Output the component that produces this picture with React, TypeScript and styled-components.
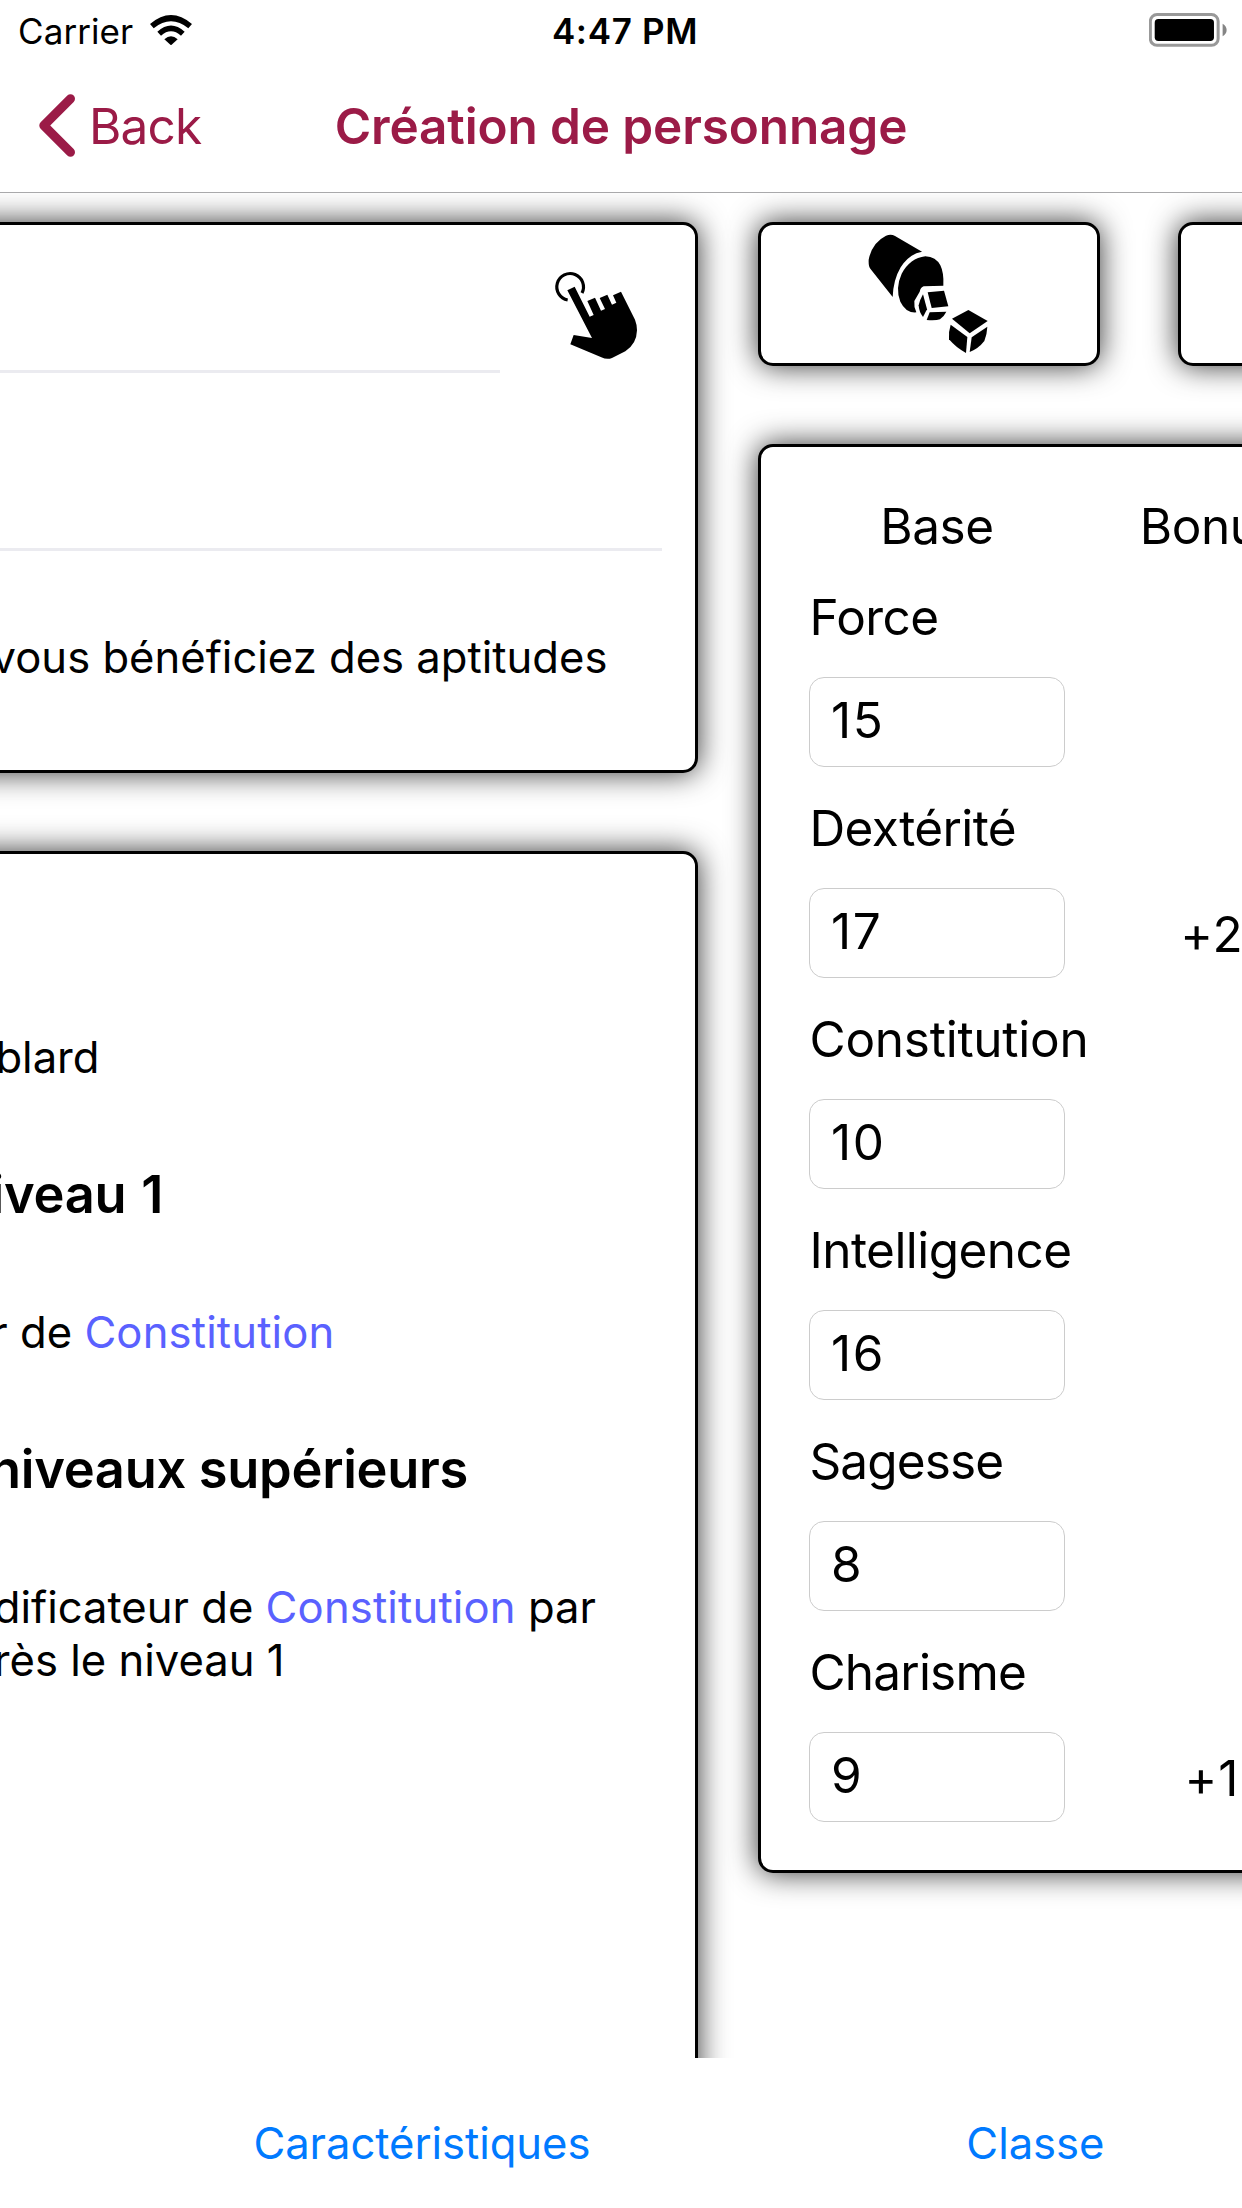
import React from 'react';
import styled, { createGlobalStyle } from 'styled-components';

const ACCENT = '#9b1b47';
const BLUE = '#007aff';
const LINK = '#5a61ff';

const GlobalStyle = createGlobalStyle`
  *, *::before, *::after { box-sizing: border-box; }
  body {
    margin: 0;
    background: #fff;
    color: #000;
    font-family: Inter, "Liberation Sans", sans-serif;
  }
`;

const Screen = styled.div`
  display: flex;
  flex-direction: column;
  width: 1242px;
  height: 2208px;
  overflow: hidden;
  background: #fff;
`;

/* Status bar */

const StatusBar = styled.div`
  display: grid;
  grid-template-columns: 1fr auto 1fr;
  align-items: center;
  flex: none;
  height: 60px;
  padding: 0 15px 0 18px;
  font-size: 35px;
  line-height: 42px;
`;

const Carrier = styled.div`
  display: flex;
  align-items: center;
  gap: 17px;
`;

const StatusText = styled.span<{ $strong?: boolean }>`
  padding: ${(p) => (p.$strong ? '2px 0 0 5px' : '2px 0 0')};
  font-weight: ${(p) => (p.$strong ? 600 : 400)};
  letter-spacing: ${(p) => (p.$strong ? '0.65px' : '0.08px')};
`;

const BatterySlot = styled.div`
  display: flex;
  justify-content: flex-end;
`;

/* Navigation bar */

const NavBar = styled.header`
  display: grid;
  grid-template-columns: 1fr auto 1fr;
  align-items: center;
  flex: none;
  height: 133px;
  padding: 0 39px 1px;
  border-bottom: 1px solid #a9a9ab;
  color: ${ACCENT};
  font-size: 49.5px;
  line-height: 60px;
`;

const BackButton = styled.button`
  display: flex;
  align-items: center;
  gap: 14px;
  padding: 0;
  border: 0;
  background: none;
  color: inherit;
  font: inherit;
  letter-spacing: -0.8px;
`;

const NavTitle = styled.h1`
  margin: 0;
  font-size: inherit;
  font-weight: 600;
  letter-spacing: -0.13px;
`;

/* Pages */

const Pages = styled.main`
  display: flex;
  gap: 60px;
  flex: none;
  height: 1865px;
  padding-top: 29px;
  overflow: hidden;
`;

const Page = styled.section<{ $width: number }>`
  display: flex;
  flex-direction: column;
  gap: 78px;
  flex: none;
  width: ${(p) => p.$width}px;
`;

const Card = styled.div<{ $height: number }>`
  flex: none;
  height: ${(p) => p.$height}px;
  border: 3px solid #000;
  border-radius: 15px;
  background: #fff;
  box-shadow: 0 0 30px rgba(0, 0, 0, 0.8);
`;

/* A card whose left part is scrolled out of view. */
const ScrolledCard = styled(Card)`
  margin-left: -63px;
  padding-left: 60px;
`;

const ChoiceRow = styled.div`
  display: flex;
  align-items: flex-start;
  gap: 52px;
  height: 148px;
`;

const HandSlot = styled.div`
  padding-top: 45px;
`;

const Field = styled.div<{ $width: number; $height: number }>`
  width: ${(p) => p.$width}px;
  height: ${(p) => p.$height}px;
  border-bottom: 3px solid #ebebf0;
`;

const Description = styled.div<{ $top: number }>`
  padding-top: ${(p) => p.$top}px;
  font-size: 43.6px;
  line-height: 53px;
`;

/* Text scrolled off to the left: each line is anchored on its right end. */
const Line = styled.div<{ $end: number; $spacing?: number; $word?: number }>`
  display: flex;
  justify-content: flex-end;
  width: ${(p) => p.$end}px;
  white-space: pre;
  letter-spacing: ${(p) => p.$spacing ?? 0}px;
  word-spacing: ${(p) => p.$word ?? 0}px;
`;

const Heading = styled.h2`
  margin: 78px 0 80px;
  font-size: 52.4px;
  font-weight: 600;
  line-height: 64px;
`;

const Link = styled.a`
  color: ${LINK};
  letter-spacing: 0.15px;
`;

/* Ability scores */

const ButtonRow = styled.div`
  display: flex;
  gap: 78px;
`;

const DiceButton = styled(Card).attrs({ as: 'button' })`
  display: flex;
  align-items: center;
  justify-content: center;
  width: 342px;
  padding: 0 0 0 1px;
`;

const Scores = styled(Card)`
  padding: 49px 48px 0;
  font-size: 49.5px;
  line-height: 60px;
`;

const ScoreRow = styled.div`
  display: grid;
  grid-template-columns: 256px 256px;
  column-gap: 19px;
  margin-bottom: 31px;
`;

const ColumnTitle = styled.div`
  text-align: center;
  letter-spacing: -0.4px;
`;

const AbilityName = styled.label<{ $spacing: number }>`
  grid-column: 1 / -1;
  margin-bottom: 30px;
  padding-left: 0.5px;
  letter-spacing: ${(p) => p.$spacing}px;
`;

const ScoreBox = styled.div`
  height: 90px;
  padding: 12px 21px;
  border: 1px solid #ccc;
  border-radius: 15px;
  letter-spacing: 1.6px;
`;

const Bonus = styled.div`
  padding-top: 16px;
  text-align: center;
  letter-spacing: 1px;
`;

/* Footer */

const Footer = styled.nav`
  display: flex;
  gap: 376px;
  flex: 1;
  padding: 58.6px 0 0 253.4px;
  color: ${BLUE};
  font-size: 43.6px;
  line-height: 53px;
  letter-spacing: -0.05px;
`;

const WifiIcon = () => (
  <svg width="42" height="30.3" viewBox="450 44 126 91">
    <path d="M450 71Q513 17 576 71L565 84Q513 42 461 84Z" />
    <path d="M472 94Q513 57 554 94L543 106Q513 80 483 106Z" />
    <path d="M493 117Q513 98 533 117L513 135Z" />
  </svg>
);

const BatteryIcon = () => (
  <svg width="78" height="34.3" viewBox="988 39 234 103">
    <rect x="992" y="43.5" width="203.5" height="92.5" rx="20" fill="none" stroke="#999" strokeWidth="9" />
    <rect x="1005" y="57" width="178" height="66" rx="11" />
    <path d="M1209 71Q1221 78 1221 90Q1221 102 1209 109Z" fill="#858585" />
  </svg>
);

const ChevronIcon = () => (
  <svg width="36" height="63" viewBox="0 0 36 63" fill="none" stroke="currentColor" strokeWidth="9" strokeLinecap="round" strokeLinejoin="round">
    <path d="M31.5 4.8L4.8 31.5L31.5 58.2" />
  </svg>
);

const HandIcon = () => (
  <svg width="92" height="92" viewBox="96 180 276 276">
    <path d="M143 270A40 40 0 1 1 186 249" fill="none" stroke="#000" strokeWidth="9.5" />
    <path d="M142 241L164 230L209 320L221 315L202 273L225 263L243 302L255 297L239 264L262 254L276 284L289 278L279 256L303 245L345 329Q351 344 351 361Q350 402 316 424L276 444Q261 450 244 442L151 403L161 375L216 384Z" />
  </svg>
);

const DiceIcon = () => (
  <svg width="126.7" height="125" viewBox="380 95 380 375">
    <path d="M440 106Q455 100 467 107L548 154Q509 161 484 201Q462 238 460 290L393 205Q387 198 388 178Q398 127 440 106Z" />
    <path d="M558 168Q590 170 603 195Q614 217 612 256L553 258Q544 261 541 274L525 302Q523 319 531 336Q500 339 483 304Q467 264 487 220Q512 174 558 168Z" />
    <path d="M565 276L614 271L627 318L577 323Z" />
    <path d="M551 282L563 327L551 350Q539 335 538 315Q541 299 551 282Z" />
    <path d="M571 336L621 334Q613 350 602 357Q590 361 562 359Z" />
    <path d="M687 329L745 362L691 399L638 355Z" />
    <path d="M634 373L684 410L680 458Q650 442 629 417Q627 394 634 373Z" />
    <path d="M744 379L697 411L691 455Q717 445 735 422Q743 402 744 379Z" />
  </svg>
);

const abilities = [
  { name: 'Force', score: '15', bonus: '', spacing: -0.6 },
  { name: 'Dextérité', score: '17', bonus: '+2', spacing: -0.6 },
  { name: 'Constitution', score: '10', bonus: '', spacing: -0.25 },
  { name: 'Intelligence', score: '16', bonus: '', spacing: -0.55 },
  { name: 'Sagesse', score: '8', bonus: '', spacing: -0.9 },
  { name: 'Charisme', score: '9', bonus: '+1', spacing: -0.8 },
];

export default function App() {
  return (
    <Screen>
      <GlobalStyle />
      <StatusBar>
        <Carrier>
          <StatusText>Carrier</StatusText>
          <WifiIcon />
        </Carrier>
        <StatusText $strong>4:47 PM</StatusText>
        <BatterySlot>
          <BatteryIcon />
        </BatterySlot>
      </StatusBar>
      <NavBar>
        <BackButton>
          <ChevronIcon />
          Back
        </BackButton>
        <NavTitle>Création de personnage</NavTitle>
      </NavBar>
      <Pages>
        <Page $width={698}>
          <ScrolledCard $height={551}>
            <ChoiceRow>
              <Field $width={500} $height={148} />
              <HandSlot>
                <HandIcon />
              </HandSlot>
            </ChoiceRow>
            <Field $width={662} $height={178} />
            <Description $top={80}>
              <Line $end={607.5}>
                <span>vous bénéficiez des aptitudes</span>
              </Line>
            </Description>
          </ScrolledCard>
          <ScrolledCard $height={1300}>
            <Description $top={177}>
              <Line $end={99.5}>
                <span>blard</span>
              </Line>
              <Heading>
                <Line $end={163} $spacing={-0.3} $word={2}>
                  <span>iveau 1</span>
                </Line>
              </Heading>
              <Line $end={334.5}>
                <span>
                  r de <Link>Constitution</Link>
                </span>
              </Line>
              <Heading>
                <Line $end={468} $spacing={-0.3}>
                  <span>niveaux supérieurs</span>
                </Line>
              </Heading>
              <Line $end={596}>
                <span>
                  dificateur de <Link>Constitution</Link> par
                </span>
              </Line>
              <Line $end={284.5}>
                <span>rès le niveau 1</span>
              </Line>
            </Description>
          </ScrolledCard>
        </Page>
        <Page $width={650}>
          <ButtonRow>
            <DiceButton $height={144}>
              <DiceIcon />
            </DiceButton>
            <DiceButton $height={144} />
          </ButtonRow>
          <Scores $height={1429}>
            <ScoreRow>
              <ColumnTitle>Base</ColumnTitle>
              <ColumnTitle>Bonus</ColumnTitle>
            </ScoreRow>
            {abilities.map((a) => (
              <ScoreRow key={a.name}>
                <AbilityName $spacing={a.spacing}>{a.name}</AbilityName>
                <ScoreBox>{a.score}</ScoreBox>
                <Bonus>{a.bonus}</Bonus>
              </ScoreRow>
            ))}
          </Scores>
        </Page>
      </Pages>
      <Footer>
        <span>Caractéristiques</span>
        <span>Classe</span>
      </Footer>
    </Screen>
  );
}
